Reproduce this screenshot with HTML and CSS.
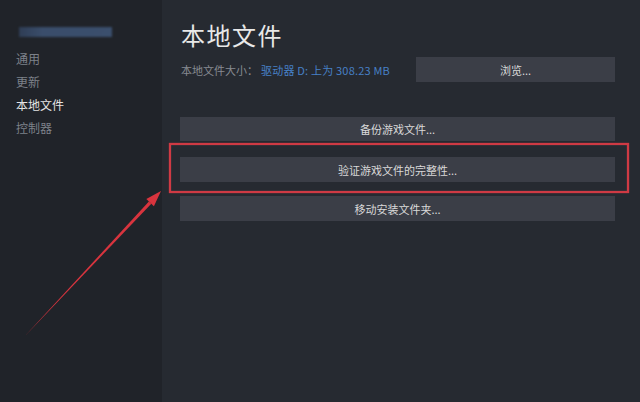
FILE: index.html
```html
<!DOCTYPE html>
<html lang="zh-CN">
<head>
<meta charset="utf-8">
<title>本地文件</title>
<link rel="stylesheet" href="styles.css">
</head>
<body>
<div class="app">
  <aside class="sidebar">
    <div class="blur-title"></div>
    <nav class="nav">
      <div class="nav-item">通用</div>
      <div class="nav-item">更新</div>
      <div class="nav-item active">本地文件</div>
      <div class="nav-item">控制器</div>
    </nav>
  </aside>
  <main class="main">
    <h1 class="title">本地文件</h1>
    <div class="info-row">
      <div class="info"><span class="label">本地文件大小：</span><span class="link">驱动器 D: 上为 308.23 MB</span></div>
      <div class="btn browse">浏览...</div>
    </div>
    <div class="btn backup">备份游戏文件...</div>
    <div class="highlight">
      <div class="btn verify">验证游戏文件的完整性...</div>
    </div>
    <div class="btn move">移动安装文件夹...</div>
  </main>
  <svg class="arrow" width="640" height="402" viewBox="0 0 640 402">
    <polygon points="24,337 151.3,203.8 148.9,201.6" fill="#d8343e"/>
    <polygon points="161,191 153.9,206.3 146.3,199.1" fill="#d8343e"/>
  </svg>
</div>
</body>
</html>
```
FILE: styles.css
```css
html, body {
  margin: 0;
  padding: 0;
  width: 640px;
  height: 402px;
  overflow: hidden;
  background: #262a31;
  font-family: "Noto Sans CJK SC", "Noto Sans", sans-serif;
}

.app {
  position: relative;
  display: flex;
  width: 640px;
  height: 402px;
}

.sidebar {
  width: 162px;
  flex: none;
  background: #202329;
  padding: 27px 0 0 15px;
  box-sizing: border-box;
}

.blur-title {
  margin-left: 4px;
  width: 93px;
  height: 10px;
  background: linear-gradient(90deg, #2f3d55 0%, #3a4d6b 25%, #3b4f6d 100%);
  filter: blur(1.2px);
}

.nav {
  margin-top: 10px;
  display: flex;
  flex-direction: column;
}

.nav-item {
  font-size: 12px;
  line-height: 23px;
  color: #7d8189;
  padding-left: 1px;
}

.nav-item.active {
  color: #e4e4e4;
}

.main {
  flex: 1;
  background: #262a31;
  padding: 20px 25px 0 18px;
  box-sizing: border-box;
  display: flex;
  flex-direction: column;
}

.title {
  margin: 0;
  font-size: 24px;
  line-height: 30px;
  font-weight: 400;
  color: #e8e8e8;
  letter-spacing: 1.5px;
  padding-left: 1px;
}

.info-row {
  margin-top: 7px;
  display: flex;
  align-items: center;
  height: 25px;
}

.info {
  font-size: 11px;
  padding-left: 1px;
}

.label {
  color: #878b92;
}

.link {
  color: #4680c6;
  margin-left: 3px;
  letter-spacing: 0.2px;
}

.btn {
  background: #3b3e47;
  color: #d9d9d9;
  font-size: 11px;
  display: flex;
  align-items: center;
  justify-content: center;
  box-sizing: border-box;
}

.browse {
  margin-left: auto;
  width: 199px;
  height: 25px;
}

.backup {
  margin-top: 35px;
  height: 24px;
}

.highlight {
  position: relative;
  margin-top: 16px;
}

.highlight::after {
  content: "";
  position: absolute;
  top: -14px;
  bottom: -11px;
  left: -11px;
  right: -14px;
  border: 2px solid #cf3a44;
  box-shadow: 0 0 1px #cf3a44, inset 0 0 1px #e06068;
  pointer-events: none;
}

.verify {
  height: 25px;
}

.move {
  margin-top: 14px;
  height: 25px;
}

.arrow {
  position: absolute;
  left: 0;
  top: 0;
  pointer-events: none;
}
```
